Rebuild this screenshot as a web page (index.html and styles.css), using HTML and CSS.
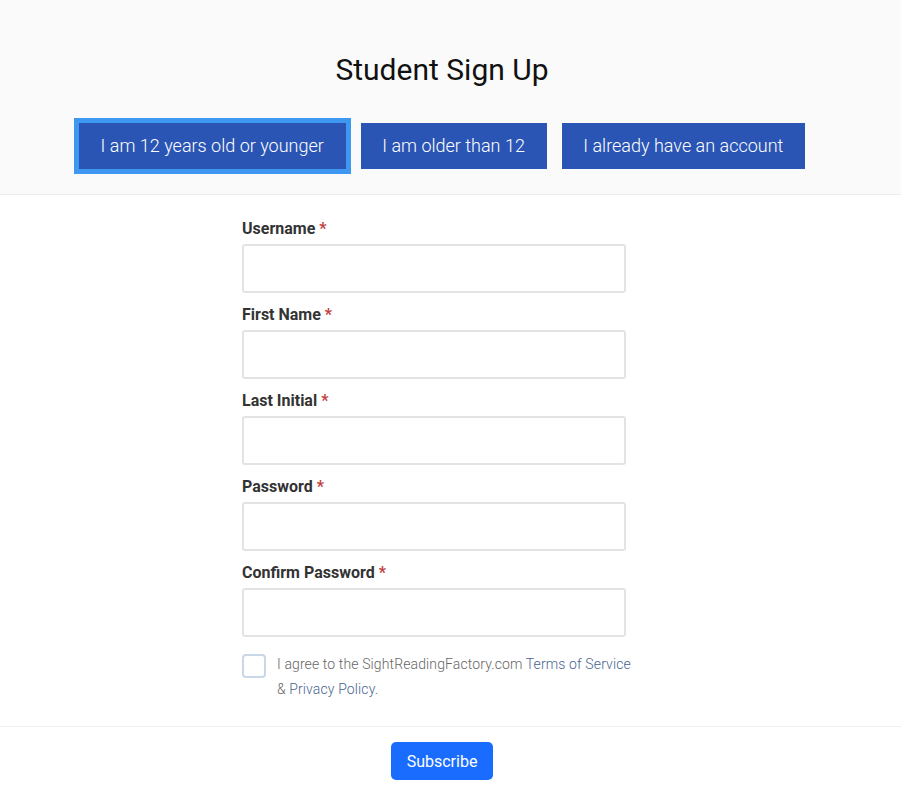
FILE: index.html
```html
<!DOCTYPE html>
<html lang="en">
<head>
<meta charset="utf-8">
<title>Student Sign Up</title>
<link rel="stylesheet" href="styles.css">
</head>
<body>
<div class="page">
  <header class="header">
    <h1 class="title">Student Sign Up</h1>
    <div class="choices">
      <button class="choice active">I am 12 years old or younger</button>
      <button class="choice">I am older than 12</button>
      <button class="choice">I already have an account</button>
    </div>
  </header>
  <form class="form">
    <div class="field">
      <label class="label">Username <span class="req">*</span></label>
      <input class="input" type="text">
    </div>
    <div class="field">
      <label class="label">First Name <span class="req">*</span></label>
      <input class="input" type="text">
    </div>
    <div class="field">
      <label class="label">Last Initial <span class="req">*</span></label>
      <input class="input" type="text">
    </div>
    <div class="field">
      <label class="label">Password <span class="req">*</span></label>
      <input class="input" type="password">
    </div>
    <div class="field">
      <label class="label">Confirm Password <span class="req">*</span></label>
      <input class="input" type="password">
    </div>
    <div class="agree">
      <span class="box"></span>
      <p class="agree-text">I agree to the SightReadingFactory.com <a href="#" class="link">Terms of Service</a><br>&amp; <a href="#" class="link">Privacy Policy</a>.</p>
    </div>
  </form>
  <footer class="footer">
    <button class="submit">Subscribe</button>
  </footer>
</div>
</body>
</html>
```
FILE: styles.css
```css
html, body {
  margin: 0;
  padding: 0;
  background: #ffffff;
  font-family: Roboto, "Liberation Sans", sans-serif;
}

.page {
  width: 884px;
}

.header {
  background: #fafafa;
  border-bottom: 1px solid #ececec;
  padding: 50px 0 25px;
  width: 901px;
  box-sizing: border-box;
}

.title {
  width: 884px;
  margin: 0;
  text-align: center;
  font-size: 30px;
  line-height: 40px;
  font-weight: 400;
  color: #111;
}

.choices {
  width: 884px;
  margin-top: 33px;
  display: flex;
  justify-content: center;
  gap: 15px;
}

.choice {
  height: 46px;
  padding: 0 21.7px 2px;
  border: none;
  border-radius: 0;
  background: #2a55b5;
  color: #fff;
  font-family: Roboto, "Liberation Sans", sans-serif;
  font-size: 18px;
  font-weight: 300;
  cursor: pointer;
}

.choice.active {
  box-shadow: 0 0 0 5px #3e97f0;
}

.form {
  width: 400px;
  margin: 0 auto;
  padding-top: 24px;
  padding-bottom: 24px;
  box-sizing: border-box;
}

.field {
  display: flex;
  flex-direction: column;
  margin-bottom: 12px;
}

.label {
  font-size: 16px;
  line-height: 20px;
  font-weight: 700;
  color: #333;
  margin-bottom: 5px;
}

.req {
  color: #c2403f;
  font-weight: 700;
}

.input {
  width: 384px;
  height: 49px;
  box-sizing: border-box;
  border: 2px solid #e2e4e4;
  border-radius: 3px;
  background: #fff;
  margin: 0;
}

.agree {
  display: flex;
  align-items: flex-start;
  gap: 11px;
  margin-top: 15px;
}

.box {
  flex: none;
  width: 24px;
  height: 24px;
  box-sizing: border-box;
  border: 2px solid #c9d7e8;
  border-radius: 4px;
  margin-top: 2px;
  background: #fff;
}

.agree-text {
  margin: 0;
  font-size: 14px;
  line-height: 25px;
  font-weight: 300;
  color: #666;
  letter-spacing: 0.12px;
  white-space: nowrap;
}

.link {
  color: #4a6590;
  text-decoration: none;
  font-weight: 300;
}

.footer {
  width: 901px;
  border-top: 1px solid #eeeeee;
  padding: 15px 0 28px;
  box-sizing: border-box;
}

.footer .submit {
  display: block;
  margin: 0 auto;
  position: relative;
  left: -8.5px;
}

.submit {
  height: 38px;
  padding: 0 16px;
  border: none;
  border-radius: 5px;
  background: #1a6cff;
  color: #fff;
  font-family: Roboto, "Liberation Sans", sans-serif;
  font-size: 16px;
  font-weight: 400;
  cursor: pointer;
}
```
